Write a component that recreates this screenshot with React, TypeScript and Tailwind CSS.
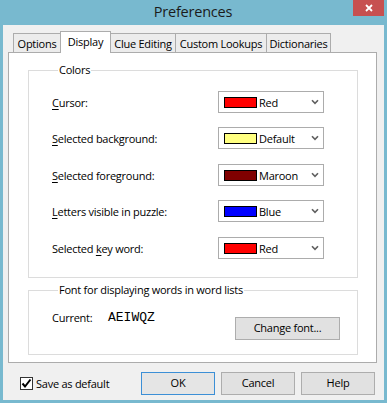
import React from 'react'

// Win8-style "Preferences" dialog, Display tab

interface ColorRow {
  label: React.ReactNode
  swatch: string
  name: string
  gap: string
}

const U = ({ children }: { children: React.ReactNode }) => (
  <span className="underline decoration-1 underline-offset-[2px]">{children}</span>
)

const rows: ColorRow[] = [
  { label: <><U>C</U>ursor:</>, swatch: 'bg-[#ff0000]', name: 'Red', gap: 'mt-0' },
  { label: <><U>S</U>elected background:</>, swatch: 'bg-[#ffff80]', name: 'Default', gap: 'mt-[14px]' },
  { label: <><U>S</U>elected foreground:</>, swatch: 'bg-[#800000]', name: 'Maroon', gap: 'mt-[15px]' },
  { label: <><U>L</U>etters visible in puzzle:</>, swatch: 'bg-[#0000ff]', name: 'Blue', gap: 'mt-[14px]' },
  { label: <>Selected <U>k</U>ey word:</>, swatch: 'bg-[#ff0000]', name: 'Red', gap: 'mt-[15px]' },
]

const tabs = [
  { label: 'Options', w: 'w-[48px]', active: false },
  { label: 'Display', w: 'w-[51px]', active: true },
  { label: 'Clue Editing', w: 'w-[66px]', active: false },
  { label: 'Custom Lookups', w: 'w-[92px]', active: false },
  { label: 'Dictionaries', w: 'w-[65px]', active: false },
]

function ColorSelect({ swatch, name }: { swatch: string; name: string }) {
  return (
    <div className="flex h-[22px] w-[106px] items-center border border-[#acacac] bg-white pl-[5px] pr-[4px]">
      <span className={`h-[11px] w-[33px] border border-black ${swatch}`} />
      <span className="ml-[2px] flex-1 leading-none">{name}</span>
      <svg width="8" height="6" viewBox="0 0 8 6">
        <path d="M1 1.2 L4 4.4 L7 1.2" stroke="#606060" strokeWidth="1.6" fill="none" />
      </svg>
    </div>
  )
}

function Button({ children, focused, className = '' }: { children: React.ReactNode; focused?: boolean; className?: string }) {
  return (
    <button
      className={`flex h-[23px] items-center justify-center text-black ${
        focused ? 'border border-[#3c8fd6] bg-[#e5e5e5]' : 'border border-[#adadad] bg-[#e1e1e1]'
      } ${className}`}
    >
      {children}
    </button>
  )
}

export default function App() {
  return (
    <div className="flex h-[403px] w-[387px] flex-col bg-[#78b9cf] px-[3px] pb-[3px] font-['Open_Sans',sans-serif] text-black">
      {/* Title bar */}
      <div className="flex h-[25px] items-start">
        <div className="w-[30px]" />
        <div className="flex-1 text-center text-[14.5px] leading-[23px] tracking-[-0.2px] text-[#1b1b1b]">Preferences</div>
        <div className="flex h-[16px] w-[31px] items-center justify-center bg-[#c75050]">
          <svg width="8" height="8" viewBox="0 0 8 8">
            <path d="M1 1 L7 7 M7 1 L1 7" stroke="white" strokeWidth="1.8" />
          </svg>
        </div>
      </div>

      {/* Client area */}
      <div className="flex flex-1 flex-col bg-[#f0f0f0] pl-[5px] pr-[7px] text-[11px] tracking-[-0.25px]">
        {/* Tabs */}
        <div className="flex items-end pl-[5px] pt-[6px]">
          {tabs.map((t, i) => (
            <div
              key={t.label}
              className={`${t.w} ${i > 0 ? '-ml-px' : ''} flex items-center justify-center border border-b-0 border-[#acacac] leading-none ${
                t.active ? 'relative z-10 -mb-px h-[22px] bg-white pb-[2px]' : 'h-[19px] bg-[#ececec]'
              }`}
            >
              {t.label}
            </div>
          ))}
        </div>

        {/* Tab panel */}
        <div className="flex flex-col border border-[#acacac] bg-white pb-[7px] pl-[19px] pr-[18px] pt-[9px]">
          <fieldset className="border border-[#dcdcdc] pb-[18px] pl-[23px] pr-[33px] pt-[13px]">
            <legend className="ml-[6px] px-[1px] leading-[16px]">Colors</legend>
            {rows.map((r, i) => (
              <div key={i} className={`flex items-center justify-between ${r.gap}`}>
                <span className="leading-none">{r.label}</span>
                <ColorSelect swatch={r.swatch} name={r.name} />
              </div>
            ))}
          </fieldset>

          <fieldset className="mt-[4px] border border-[#dcdcdc] pb-[14px] pl-[23px] pr-[17px]">
            <legend className="ml-[6px] px-[1px] leading-[16px]">Font for displaying words in word lists</legend>
            <div className="flex items-start">
              <div className="mt-[12px] flex leading-[16px]">
                <span className="w-[56px]">Current:</span>
                <span className="font-['Liberation_Mono',monospace] text-[13px] tracking-normal">AEIWQZ</span>
              </div>
              <Button className="ml-auto mt-[19px] w-[105px]">Change font...</Button>
            </div>
          </fieldset>
        </div>

        {/* Bottom row */}
        <div className="mt-[9px] flex items-center pb-[5px]">
          <div className="ml-[12px] flex items-center">
            <span className="flex h-[13px] w-[13px] items-center justify-center border border-[#333333] bg-white">
              <svg width="11" height="11" viewBox="0 0 11 11">
                <path d="M1.5 5.5 L4 8.5 L9.5 1.5" stroke="black" strokeWidth="2" fill="none" />
              </svg>
            </span>
            <span className="ml-[3px] leading-none">Save as default</span>
          </div>
          <div className="ml-auto mr-[2px] flex gap-[6px]">
            <Button focused className="w-[74px]">OK</Button>
            <Button className="w-[74px]">Cancel</Button>
            <Button className="w-[74px]">Help</Button>
          </div>
        </div>
      </div>
    </div>
  )
}
